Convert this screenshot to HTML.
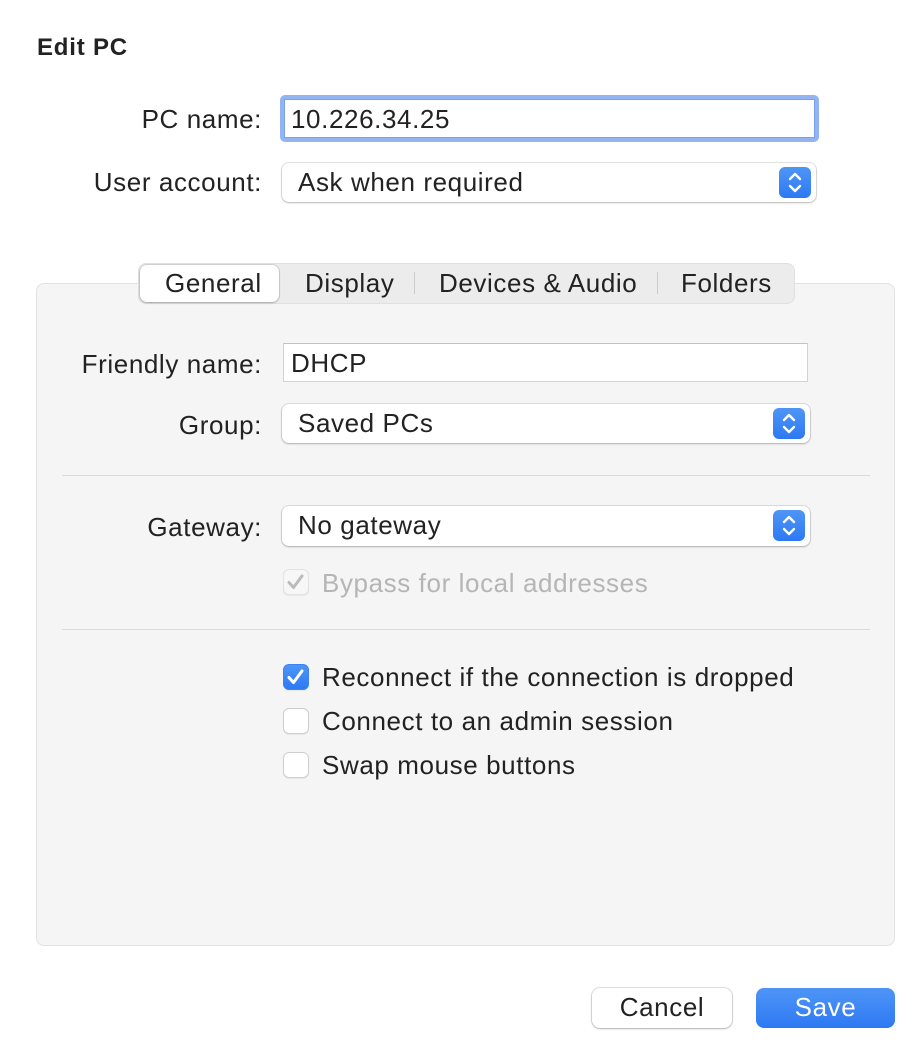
<!DOCTYPE html>
<html><head><meta charset="utf-8"><style>
*{box-sizing:border-box;margin:0;padding:0}
body{width:916px;height:1054px;background:#fff;font-family:"Liberation Sans",sans-serif;color:#222;position:relative;overflow:hidden;font-size:26px;letter-spacing:0.6px}
.a{position:absolute}
.lbl{position:absolute;font-size:26px;text-align:right;width:262px;left:0}
.pop{position:absolute;background:#fff;border-radius:7px;box-shadow:0 0 0 1px rgba(0,0,0,.1),0 1px 2px rgba(0,0,0,.2);font-size:26px;padding-left:16px;line-height:38px}
.step{position:absolute;right:5px;top:4px;width:32px;height:31px;border-radius:6px;background:linear-gradient(#4f95f7,#2d79f3)}
.cb{position:absolute;width:26px;height:26px;border-radius:6px;background:#fff;border:1px solid #cfcfcf;box-shadow:0 1px 1px rgba(0,0,0,.06)}
.ct{position:absolute;left:322px;font-size:26px}
.sep{position:absolute;left:62px;width:808px;height:1px;background:#dadada}
</style></head><body>
<div class="a" style="left:37px;top:34px;font-size:24px;font-weight:bold;letter-spacing:0.8px">Edit PC</div>

<div class="lbl" style="top:104px">PC name:</div>
<div class="a" style="left:280px;top:95px;width:539px;height:47px;border:4px solid #93b4f2;border-radius:5px;background:#fff"><div style="position:absolute;left:0;top:0;right:0;bottom:0;border:1px solid #7aa0e8"></div><div class="a" style="left:7px;top:5px">10.226.34.25</div></div>

<div class="lbl" style="top:167px">User account:</div>
<div class="pop" style="left:282px;top:163px;width:534px;height:39px">Ask when required<div class="step"><svg width="32" height="31" viewBox="0 0 32 31"><path d="M11 12l5-5 5 5M11 19l5 5 5-5" stroke="#fff" stroke-width="2.4" fill="none" stroke-linecap="round" stroke-linejoin="round"/></svg></div></div>

<div class="a" style="left:36px;top:283px;width:859px;height:663px;background:#f5f5f5;border:1px solid #e2e2e2;border-radius:8px"></div>

<div class="a" style="left:138px;top:263px;width:657px;height:41px;background:#ececec;border-radius:8px;border:1px solid #e0e0e0"></div>
<div class="a" style="left:140px;top:265px;width:139px;height:37px;background:#fff;border-radius:7px;box-shadow:0 0 0 1px rgba(0,0,0,.1),0 1px 2px rgba(0,0,0,.2)"></div>
<div class="a" style="left:165px;top:268px">General</div>
<div class="a" style="left:305px;top:268px">Display</div>
<div class="a" style="left:414px;top:272px;width:1px;height:22px;background:#ccc"></div>
<div class="a" style="left:439px;top:268px">Devices &amp; Audio</div>
<div class="a" style="left:657px;top:272px;width:1px;height:22px;background:#ccc"></div>
<div class="a" style="left:681px;top:268px">Folders</div>

<div class="lbl" style="top:349px">Friendly name:</div>
<div class="a" style="left:283px;top:343px;width:525px;height:39px;background:#fff;border:1px solid #d3d3d3;border-top-color:#c2c2c2"><div class="a" style="left:7px;top:4px">DHCP</div></div>

<div class="lbl" style="top:410px">Group:</div>
<div class="pop" style="left:282px;top:404px;width:528px;height:39px">Saved PCs<div class="step"><svg width="32" height="31" viewBox="0 0 32 31"><path d="M11 12l5-5 5 5M11 19l5 5 5-5" stroke="#fff" stroke-width="2.4" fill="none" stroke-linecap="round" stroke-linejoin="round"/></svg></div></div>

<div class="sep" style="top:475px"></div>

<div class="lbl" style="top:512px">Gateway:</div>
<div class="pop" style="left:282px;top:506px;width:528px;height:40px">No gateway<div class="step"><svg width="32" height="31" viewBox="0 0 32 31"><path d="M11 12l5-5 5 5M11 19l5 5 5-5" stroke="#fff" stroke-width="2.4" fill="none" stroke-linecap="round" stroke-linejoin="round"/></svg></div></div>

<div class="cb" style="left:283px;top:569px;background:#f7f7f7;border-color:#e2e2e2"><svg width="24" height="24" viewBox="0 0 24 24"><path d="M5 12.5l4.5 5L18 6" stroke="#bbb" stroke-width="3" fill="none" stroke-linecap="round" stroke-linejoin="round"/></svg></div>
<div class="ct" style="top:568px;color:#b5b5b5">Bypass for local addresses</div>

<div class="sep" style="top:629px"></div>

<div class="cb" style="left:283px;top:664px;background:linear-gradient(#4f95f7,#2d79f3);border-color:#3a83f0"><svg width="24" height="24" viewBox="0 0 24 24"><path d="M5 12.5l4.5 5L18 6" stroke="#fff" stroke-width="3" fill="none" stroke-linecap="round" stroke-linejoin="round"/></svg></div>
<div class="ct" style="top:662px">Reconnect if the connection is dropped</div>
<div class="cb" style="left:283px;top:708px"></div>
<div class="ct" style="top:706px">Connect to an admin session</div>
<div class="cb" style="left:283px;top:752px"></div>
<div class="ct" style="top:750px">Swap mouse buttons</div>

<div class="a" style="left:592px;top:988px;width:140px;height:40px;background:#fff;border-radius:8px;box-shadow:0 0 0 1px rgba(0,0,0,.12),0 1px 2px rgba(0,0,0,.2);text-align:center;line-height:38px">Cancel</div>
<div class="a" style="left:756px;top:988px;width:139px;height:40px;background:linear-gradient(#4f95f7,#2d79f3);border-radius:8px;color:#fff;text-align:center;line-height:38px">Save</div>
</body></html>
